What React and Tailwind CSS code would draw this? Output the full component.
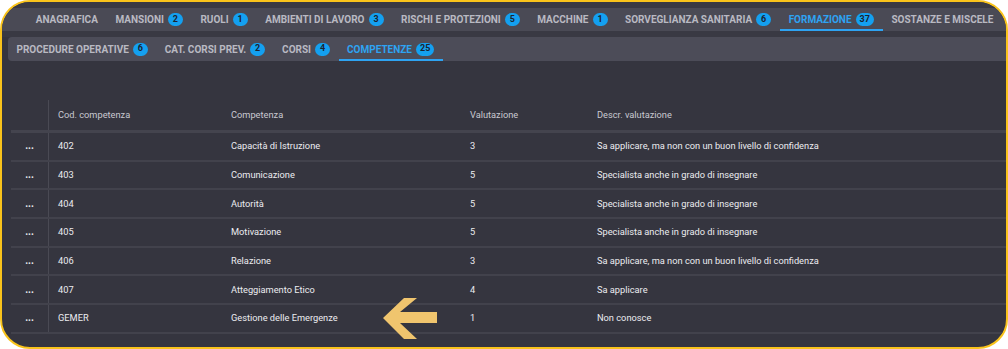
import React from 'react'

const topTabs = [
  { label: 'ANAGRAFICA' },
  { label: 'MANSIONI', count: 2 },
  { label: 'RUOLI', count: 1 },
  { label: 'AMBIENTI DI LAVORO', count: 3 },
  { label: 'RISCHI E PROTEZIONI', count: 5 },
  { label: 'MACCHINE', count: 1 },
  { label: 'SORVEGLIANZA SANITARIA', count: 6 },
  { label: 'FORMAZIONE', count: 37, active: true },
  { label: 'SOSTANZE E MISCELE' },
]

const subTabs = [
  { label: 'PROCEDURE OPERATIVE', count: 6 },
  { label: 'CAT. CORSI PREV.', count: 2 },
  { label: 'CORSI', count: 4 },
  { label: 'COMPETENZE', count: 25, active: true },
]

const rows = [
  ['402', 'Capacità di Istruzione', '3', 'Sa applicare, ma non con un buon livello di confidenza'],
  ['403', 'Comunicazione', '5', 'Specialista anche in grado di insegnare'],
  ['404', 'Autorità', '5', 'Specialista anche in grado di insegnare'],
  ['405', 'Motivazione', '5', 'Specialista anche in grado di insegnare'],
  ['406', 'Relazione', '3', 'Sa applicare, ma non con un buon livello di confidenza'],
  ['407', 'Atteggiamento Etico', '4', 'Sa applicare'],
  ['GEMER', 'Gestione delle Emergenze', '1', 'Non conosce'],
]

function Badge({ n }) {
  return (
    <span className="ml-[4px] inline-flex h-[13px] min-w-[15px] shrink-0 items-center justify-center rounded-full bg-[#14a0f0] px-[4px] text-[9px] font-bold text-[#1b2330]">
      {n}
    </span>
  )
}

function Tab({ tab, pad }) {
  return (
    <div
      className={
        'relative flex h-full shrink-0 items-center whitespace-nowrap text-[10px] font-bold ' +
        pad +
        (tab.active ? ' text-[#2ea3f2]' : ' text-[#b9b9c2]')
      }
    >
      {tab.label}
      {tab.count != null && <Badge n={tab.count} />}
      {tab.active && <div className="absolute bottom-0 left-0 right-0 h-[2px] bg-[#2ea3f2]" />}
    </div>
  )
}

function Arrow() {
  return (
    <svg width="56" height="44" viewBox="0 0 56 44" className="absolute left-[370px] top-[-8px]">
      <polygon
        points="2,21 23,1 36,1 19,15 56,15 56,26 19,26 36,42 23,42"
        fill="#f0c56e"
      />
    </svg>
  )
}

const cols = 'grid grid-cols-[38px_173px_239px_127px_1fr] items-center'

export default function App() {
  return (
    <div className="h-[349px] w-[1008px] bg-white" style={{ fontFamily: 'Roboto, "Noto Sans", sans-serif' }}>
      <div className="flex h-full w-full flex-col overflow-hidden rounded-[30px] border-[2.5px] border-[#f9c31b] bg-[#35353f]">
        <div className="h-[6px] shrink-0 bg-[#393943]" />
        <div className="flex h-[23px] shrink-0 items-stretch bg-[#4a4a55] pl-[25px]">
          {topTabs.map((t) => (
            <Tab key={t.label} tab={t} pad="px-[8.75px]" />
          ))}
        </div>
        <div className="h-[6px] shrink-0 bg-[#393943]" />
        <div className="ml-[6px] flex h-[24px] shrink-0 items-stretch rounded-l-[4px] bg-[#4c4c58]">
          {subTabs.map((t) => (
            <Tab key={t.label} tab={t} pad="px-[8.5px]" />
          ))}
        </div>
        <div className="ml-[9px] mt-[39px] flex flex-col text-[9.25px]">
          <div className={cols + ' h-[33px] border-b-[3px] border-[#44444e] text-[#c9c9d1]'}>
            <div className="h-full border-r border-[#4a4a54]" />
            <div className="pl-[9px]">Cod. competenza</div>
            <div className="pl-[9px]">Competenza</div>
            <div className="pl-[9px]">Valutazione</div>
            <div className="pl-[9px]">Descr. valutazione</div>
          </div>
          {rows.map((r, i) => (
            <div
              key={r[0]}
              className={cols + ' relative h-[28.67px] border-b-2 border-[#42424c] text-[#ececf0]'}
            >
              <div className="flex h-full items-center justify-center border-r border-[#4a4a54] text-[10px] font-bold leading-none">
                ...
              </div>
              <div className="pl-[9px]">{r[0]}</div>
              <div className="pl-[9px]">{r[1]}</div>
              <div className="pl-[9px]">{r[2]}</div>
              <div className="pl-[9px]">{r[3]}</div>
              {i === rows.length - 1 && <Arrow />}
            </div>
          ))}
        </div>
      </div>
    </div>
  )
}
